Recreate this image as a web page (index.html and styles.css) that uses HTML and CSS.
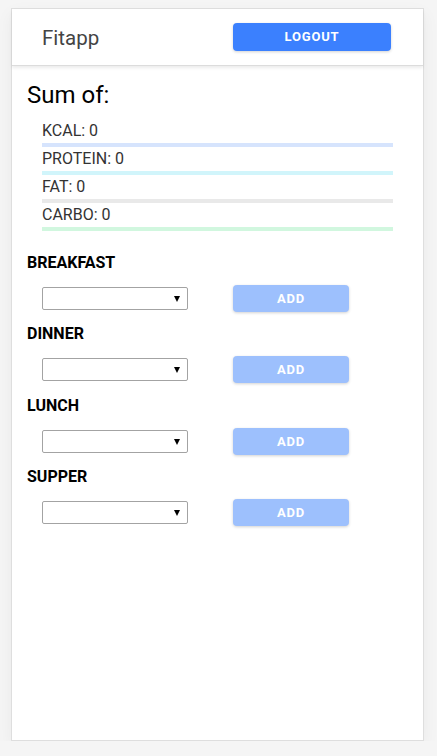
FILE: index.html
```html
<!DOCTYPE html>
<html>
<head>
<meta charset="utf-8">
<link rel="stylesheet" href="styles.css">
</head>
<body>
<div class="card">
  <header class="topbar">
    <span class="brand">Fitapp</span>
    <button class="btn btn-logout">LOGOUT</button>
  </header>
  <main class="content">
    <h1 class="sum-title">Sum of:</h1>
    <ul class="totals">
      <li class="total total-kcal">KCAL: 0</li>
      <li class="total total-protein">PROTEIN: 0</li>
      <li class="total total-fat">FAT: 0</li>
      <li class="total total-carbo">CARBO: 0</li>
    </ul>
    <section class="meal">
      <h2 class="meal-title">BREAKFAST</h2>
      <div class="meal-row">
        <span class="select-wrap"><select class="meal-select"><option></option></select></span>
        <button class="btn btn-add">ADD</button>
      </div>
    </section>
    <section class="meal">
      <h2 class="meal-title">DINNER</h2>
      <div class="meal-row">
        <span class="select-wrap"><select class="meal-select"><option></option></select></span>
        <button class="btn btn-add">ADD</button>
      </div>
    </section>
    <section class="meal">
      <h2 class="meal-title">LUNCH</h2>
      <div class="meal-row">
        <span class="select-wrap"><select class="meal-select"><option></option></select></span>
        <button class="btn btn-add">ADD</button>
      </div>
    </section>
    <section class="meal">
      <h2 class="meal-title">SUPPER</h2>
      <div class="meal-row">
        <span class="select-wrap"><select class="meal-select"><option></option></select></span>
        <button class="btn btn-add">ADD</button>
      </div>
    </section>
  </main>
</div>
</body>
</html>
```
FILE: styles.css
```css
* { box-sizing: border-box; }
html, body {
  margin: 0;
  padding: 0;
  background: #f5f5f5;
  font-family: Roboto, "Liberation Sans", sans-serif;
}
body { padding: 8px 13px 0 11px; }
.card {
  width: 413px;
  height: 733px;
  background: #fff;
  border: 1px solid #dedede;
  box-shadow: 0 6px 16px rgba(0,0,0,0.05);
}
.topbar {
  height: 57px;
  display: flex;
  align-items: center;
  padding: 0 32px 0 30px;
  justify-content: space-between;
  border-bottom: 1px solid #dcdcdc;
  box-shadow: 0 2px 3px rgba(0,0,0,0.08);
}
.brand {
  font-size: 20.5px;
  color: #444;
  margin-top: 1px;
}
.btn {
  font-family: Roboto, "Liberation Sans", sans-serif;
  font-weight: 700;
  font-size: 13px;
  letter-spacing: 0.8px;
  color: #fff;
  border: none;
  border-radius: 4px;
  cursor: pointer;
  box-shadow: 0 1px 3px rgba(0,0,0,0.18);
  padding: 0;
}
.btn-logout {
  width: 158px;
  height: 28px;
  background: #3b80fe;
  margin-top: -1px;
}
.content {
  padding: 15px 15px 0 15px;
}
.sum-title {
  margin: 0;
  font-size: 24px;
  line-height: 28px;
  font-weight: 400;
  color: #000;
}
.totals {
  list-style: none;
  margin: 10px 0 0 0;
  padding: 0 15px;
}
.total {
  font-size: 16px;
  line-height: 24px;
  color: #333;
  border-bottom: 4px solid #eee;
}
.total-kcal { border-color: #d6e4fd; }
.total-protein { border-color: #d1f5fb; }
.total-fat { border-color: #e9e9e9; }
.total-carbo { border-color: #d1f7df; }
.meal { margin-top: 20px; }
.meal + .meal { margin-top: 10.4px; }
.meal-title {
  margin: 0;
  font-size: 16px;
  line-height: 24px;
  font-weight: 700;
  color: #000;
}
.meal-row {
  margin-top: 10px;
  display: flex;
  align-items: center;
  padding-left: 15px;
  height: 27px;
}
.select-wrap {
  position: relative;
  display: block;
  width: 146px;
  height: 23px;
}
.select-wrap::after {
  content: "";
  position: absolute;
  right: 8px;
  top: 9px;
  border-left: 3.5px solid transparent;
  border-right: 3.5px solid transparent;
  border-top: 6px solid #000;
  pointer-events: none;
}
.meal-select {
  -webkit-appearance: none;
  appearance: none;
  display: block;
  width: 146px;
  height: 23px;
  margin: 0;
  background: #fff;
  border: 1px solid #a3a3a3;
  border-radius: 2px;
}
.btn-add {
  margin-left: 45px;
  width: 116px;
  height: 27px;
  background: #9dc0fd;
}
```
